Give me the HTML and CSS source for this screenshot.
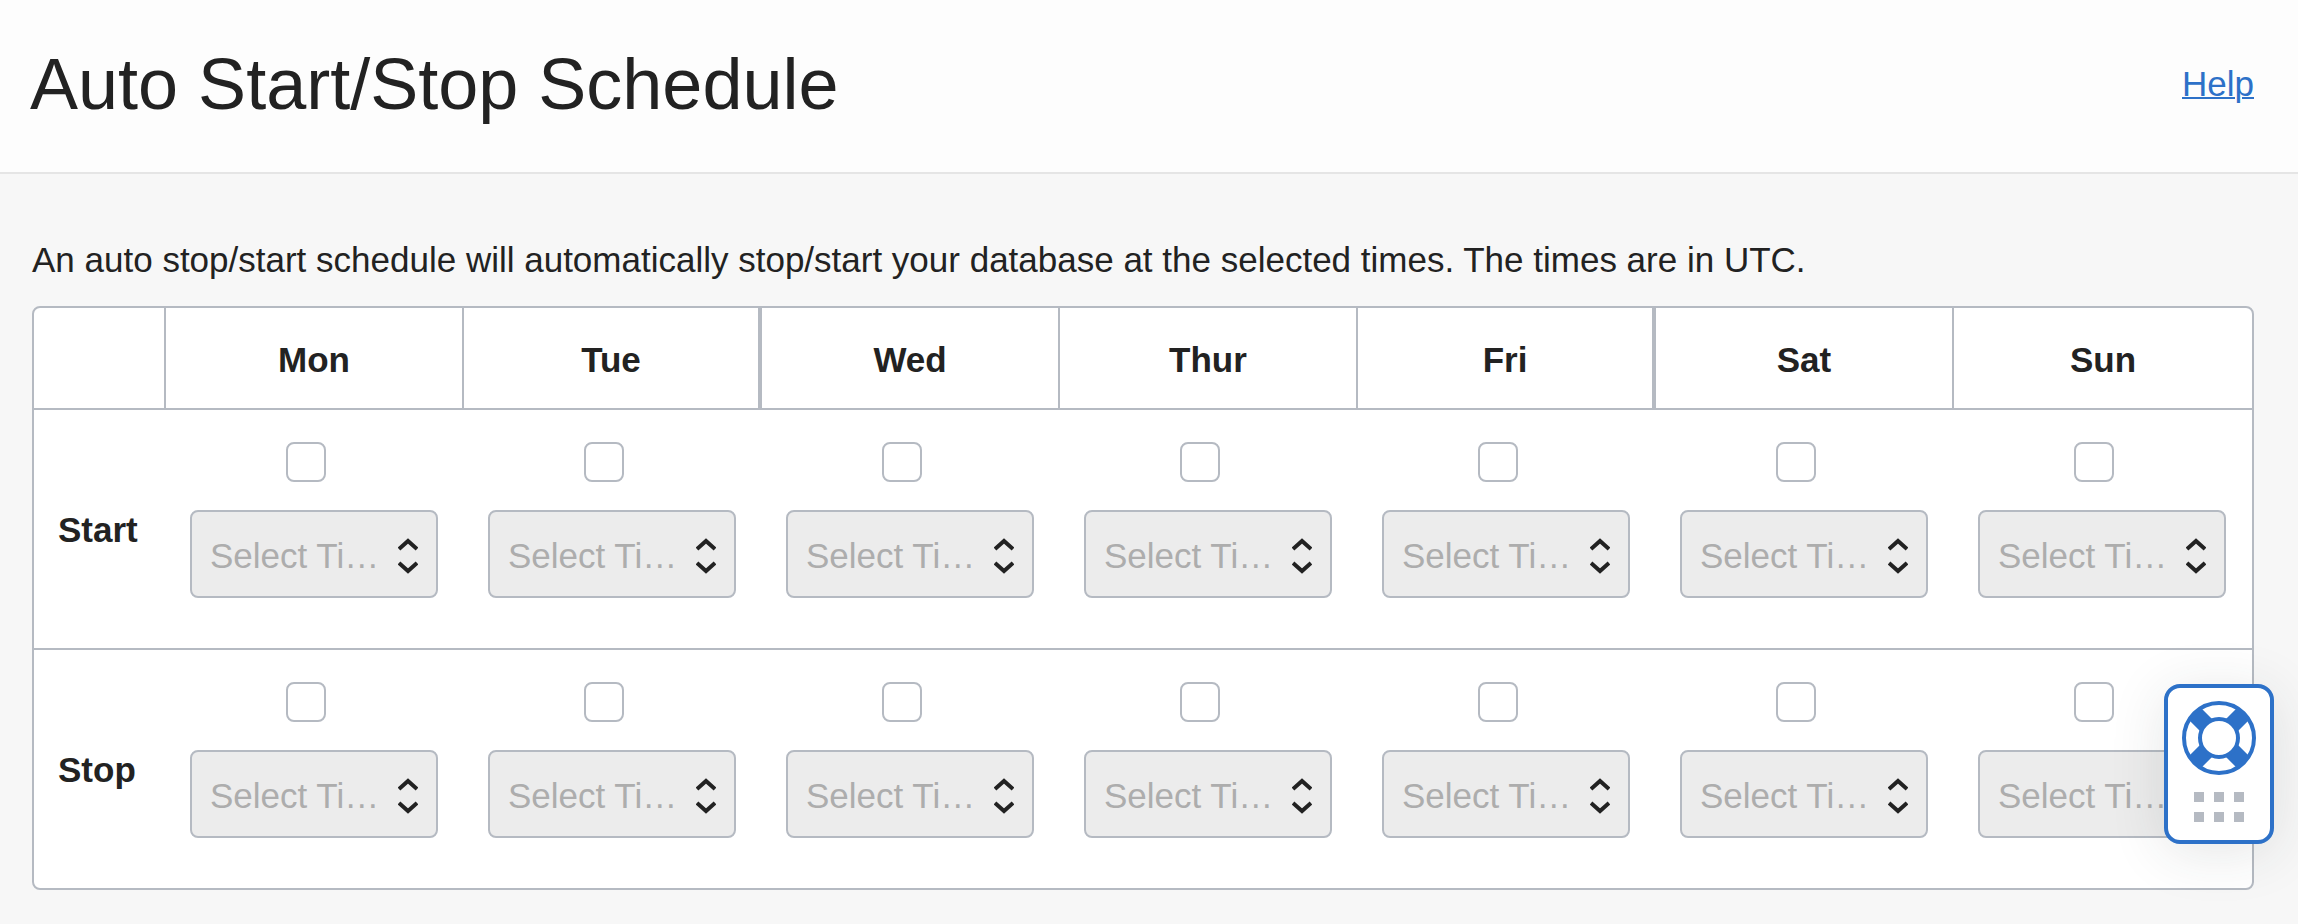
FILE: index.html
```html
<!DOCTYPE html>
<html lang="en">
<head>
<meta charset="utf-8">
<meta name="viewport" content="width=device-width, initial-scale=1">
<title>Auto Start/Stop Schedule</title>
<link rel="stylesheet" href="styles.css">
</head>
<body>
<svg class="sprite" aria-hidden="true">
  <symbol id="chevrons" viewBox="0 0 20 36">
    <path d="M1 11 10 3l9 8M1 25l9 8 9-8" fill="none" stroke="#222" stroke-width="4"/>
  </symbol>
</svg>
<header class="page-header">
  <h1 class="page-title">Auto Start/Stop Schedule</h1>
  <a class="help-link" href="#help">Help</a>
</header>
<main class="content">
  <p class="intro">An auto stop/start schedule will automatically stop/start your database at the selected times. The times are in UTC.</p>
  <div class="schedule-frame">
    <table class="schedule">
      <thead>
        <tr>
          <td class="corner"></td>
          <th scope="col">Mon</th>
          <th scope="col" class="heavy">Tue</th>
          <th scope="col">Wed</th>
          <th scope="col">Thur</th>
          <th scope="col" class="heavy">Fri</th>
          <th scope="col">Sat</th>
          <th scope="col">Sun</th>
        </tr>
      </thead>
      <tbody id="schedule-rows"></tbody>
    </table>
  </div>
</main>
<button class="support" type="button" aria-label="Support">
  <svg class="support-ring" viewBox="0 0 76 76" aria-hidden="true">
    <g fill="none" stroke="#2d71c8">
      <path d="M14 14 25 25M51 25 62 14M14 62 25 51M51 51 62 62" stroke-width="17"/>
      <circle cx="38" cy="38" r="35" stroke-width="4"/>
      <circle cx="38" cy="38" r="19" stroke-width="4"/>
    </g>
  </svg>
  <svg class="support-grip" viewBox="0 0 50 30" aria-hidden="true">
    <path fill="#b5bac2" d="M0 0h10v10H0zM20 0h10v10H20zM40 0h10v10H40zM0 20h10v10H0zM20 20h10v10H20zM40 20h10v10H40z"/>
  </svg>
</button>
<script src="schedule.js"></script>
</body>
</html>
```
FILE: styles.css
```css
*, *::before, *::after {
  box-sizing: border-box;
}

body {
  margin: 0;
  background: #f7f7f7;
  color: #222;
  font: 35px/48px "Liberation Sans", Arial, sans-serif;
}

.sprite {
  display: none;
}

.page-header {
  display: flex;
  align-items: center;
  justify-content: space-between;
  padding: 42px 44px 46px 30px;
  background: #fdfdfd;
  border-bottom: 2px solid #e5e5e5;
}

.page-title {
  margin: 0;
  font-size: 72px;
  line-height: 84px;
  font-weight: 400;
}

.help-link {
  color: #2d71c8;
  text-decoration-thickness: 2px;
}

.content {
  padding: 62px 44px 34px 32px;
}

.intro {
  margin: 0 0 22px;
}

.schedule-frame {
  background: #fff;
  border: 2px solid #b5bac2;
  border-radius: 8px;
  overflow: hidden;
}

.schedule {
  width: 100%;
  table-layout: fixed;
  border-collapse: separate;
  border-spacing: 0;
}

.schedule th,
.schedule td {
  padding: 0;
}

.schedule thead th,
.schedule thead td {
  height: 100px;
  padding-top: 4px;
  border-right: 2px solid #b5bac2;
}

.schedule thead th.heavy {
  border-right-width: 4px;
}

.schedule thead th:last-child {
  border-right: 0;
}

.schedule .corner {
  width: 132px;
}

.schedule tbody th,
.schedule tbody td {
  border-top: 2px solid #b5bac2;
}

.schedule tbody th {
  padding: 2px 0 0 24px;
  text-align: left;
}

.schedule tbody td {
  padding: 32px 26px 50px 24px;
}

.slot {
  display: flex;
  flex-direction: column;
  align-items: center;
  gap: 28px;
}

.slot-toggle {
  appearance: none;
  width: 40px;
  height: 40px;
  margin: 0 16px 0 0;
  background: #fff;
  border: 2px solid #b5bac2;
  border-radius: 8px;
}

.slot-toggle:checked {
  background: #2d71c8;
}

.slot-picker {
  position: relative;
  width: 100%;
}

.slot-time {
  display: block;
  appearance: none;
  width: 100%;
  height: 88px;
  padding: 4px 54px 0 18px;
  background: #ececec;
  border: 2px solid #b5bac2;
  border-radius: 8px;
  color: #adadad;
  font: inherit;
  text-overflow: ellipsis;
  opacity: 1;
}

.slot-chevrons {
  position: absolute;
  top: 28px;
  right: 20px;
  width: 20px;
  height: 36px;
  pointer-events: none;
}

.support {
  position: fixed;
  right: 24px;
  bottom: 80px;
  display: flex;
  flex-direction: column;
  align-items: center;
  gap: 16px;
  padding: 12px 14px 18px;
  width: 110px;
  background: #fff;
  border: 4px solid #2d71c8;
  border-radius: 16px;
  box-shadow: 0 8px 56px rgba(40, 50, 50, 0.12);
}

.support-ring {
  width: 76px;
  height: 76px;
}

.support-grip {
  width: 50px;
  height: 30px;
}
```
FILE: schedule.js
```js
const days = ["Mon", "Tue", "Wed", "Thur", "Fri", "Sat", "Sun"];

const slot = (action, day) => `
  <td>
    <div class="slot">
      <input class="slot-toggle" type="checkbox" aria-label="${action} on ${day}">
      <div class="slot-picker">
        <select class="slot-time" aria-label="${action} time on ${day}" disabled>
          <option>Select Time</option>
        </select>
        <svg class="slot-chevrons" aria-hidden="true"><use href="#chevrons"/></svg>
      </div>
    </div>
  </td>`;

document.getElementById("schedule-rows").innerHTML = ["Start", "Stop"]
  .map((action) => `<tr><th scope="row">${action}</th>${days.map((day) => slot(action, day)).join("")}</tr>`)
  .join("");
```
